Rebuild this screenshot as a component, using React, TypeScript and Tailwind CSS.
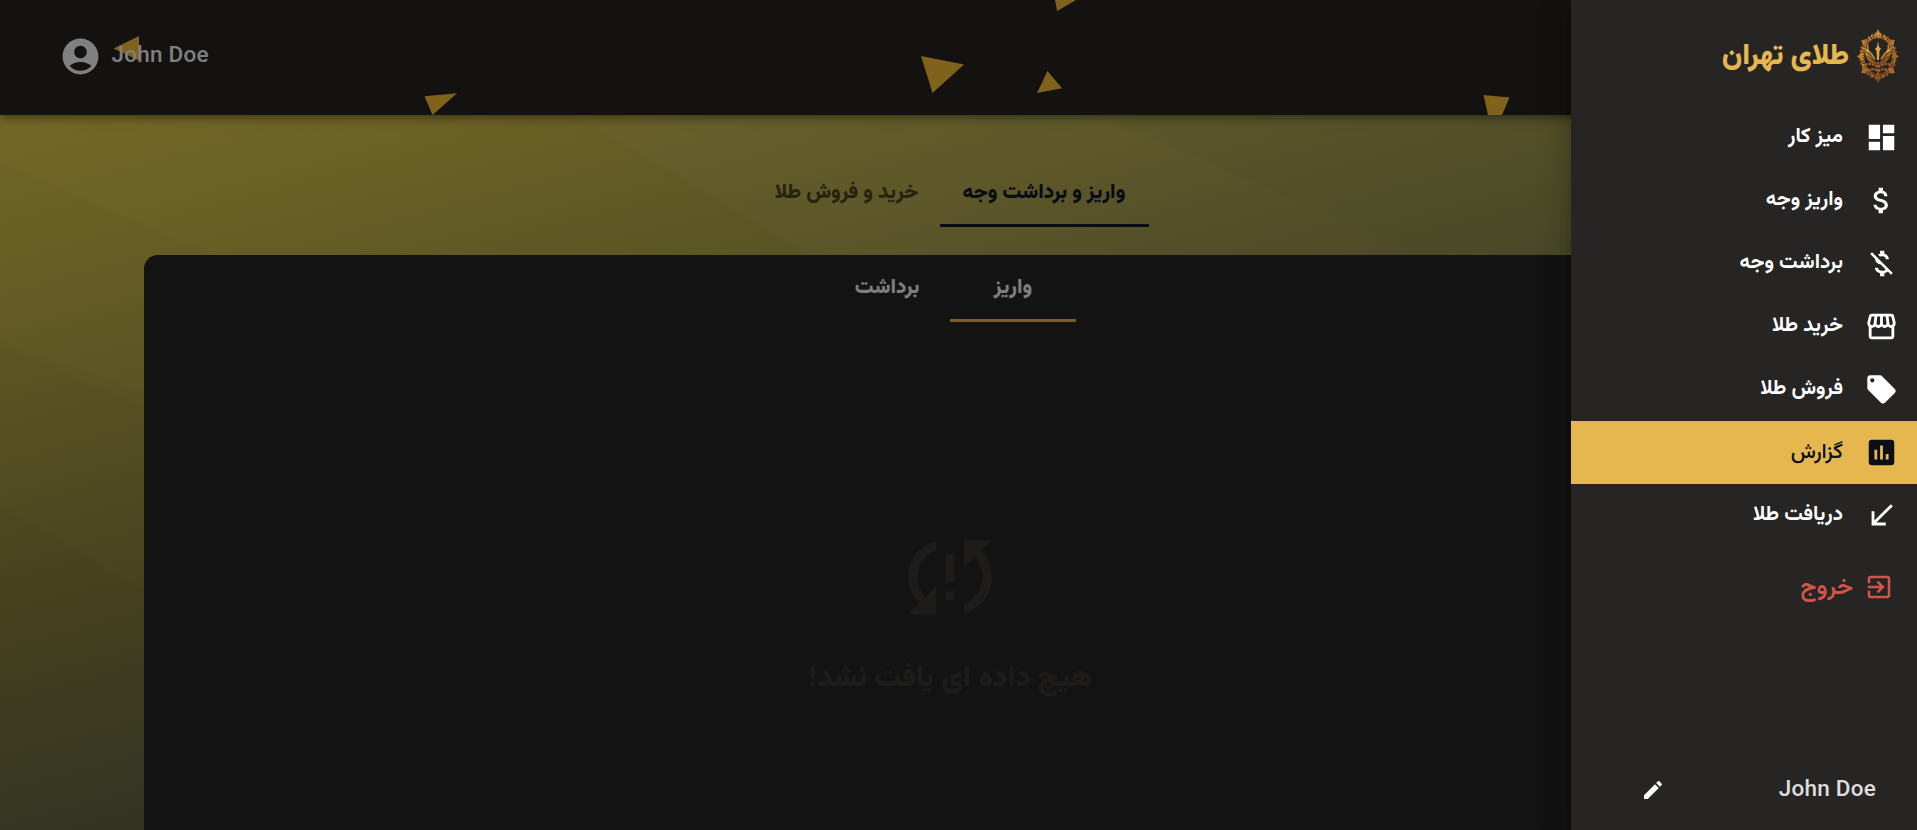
import type { ReactNode } from "react";
import { MdAttachMoney, MdMoneyOff, MdCallReceived, MdEdit } from "react-icons/md";

type IconProps = { className?: string };

function Glyph({ d, className }: { d: string; className?: string }) {
  return (
    <svg viewBox="0 0 24 24" fill="currentColor" className={className} aria-hidden="true">
      <path d={d} />
    </svg>
  );
}

const AccountCircle = (p: IconProps) => (
  <Glyph {...p} d="M12 2C6.48 2 2 6.48 2 12s4.48 10 10 10 10-4.48 10-10S17.52 2 12 2zm0 4c1.93 0 3.5 1.57 3.5 3.5S13.93 13 12 13s-3.5-1.57-3.5-3.5S10.07 6 12 6zm0 14c-2.03 0-4.43-.82-6.14-2.88C7.55 15.8 9.68 15 12 15s4.45.8 6.14 2.12C16.43 19.18 14.03 20 12 20z" />
);
const Dashboard = (p: IconProps) => (
  <Glyph {...p} d="M3 13h8V3H3v10zm0 8h8v-6H3v6zm10 0h8V11h-8v10zm0-18v6h8V3h-8z" />
);
const Storefront = (p: IconProps) => (
  <Glyph {...p} d="M21.9 8.89l-1.05-4.37c-.22-.9-1-1.52-1.91-1.52H5.05c-.9 0-1.69.63-1.9 1.52L2.1 8.89c-.24 1.02-.02 2.06.62 2.88.08.11.19.19.28.29V19c0 1.1.9 2 2 2h14c1.1 0 2-.9 2-2v-6.94c.09-.09.2-.18.28-.28.64-.82.87-1.87.62-2.89zm-2.99-3.9l1.05 4.37c.1.42.01.84-.25 1.17-.14.18-.44.47-.94.47-.61 0-1.14-.49-1.21-1.14L16.98 5l1.93-.01zM13 5h1.96l.54 4.52c.05.39-.07.78-.33 1.07-.22.26-.54.41-.95.41-.67 0-1.22-.59-1.22-1.31V5zM8.49 9.52L9.04 5H11v4.69c0 .72-.55 1.31-1.29 1.31-.34 0-.65-.15-.89-.41-.25-.29-.37-.68-.33-1.07zm-4.45-.16L5.05 5h1.97l-.58 4.86c-.08.65-.6 1.14-1.21 1.14-.49 0-.8-.29-.93-.47-.27-.32-.36-.75-.26-1.17zM5 19v-6.03c.08.01.15.03.23.03.87 0 1.66-.36 2.24-.95.6.6 1.4.95 2.31.95.87 0 1.65-.36 2.23-.93.59.57 1.39.93 2.29.93.84 0 1.64-.35 2.24-.95.58.59 1.37.95 2.24.95.08 0 .15-.02.23-.03V19H5z" />
);
const Tag = (p: IconProps) => (
  <Glyph {...p} d="M21.41 11.58l-9-9C12.05 2.22 11.55 2 11 2H4c-1.1 0-2 .9-2 2v7c0 .55.22 1.05.59 1.42l9 9c.36.36.86.58 1.41.58.55 0 1.05-.22 1.41-.59l7-7c.37-.36.59-.86.59-1.41 0-.55-.23-1.06-.59-1.42zM5.5 7C4.67 7 4 6.33 4 5.5S4.67 4 5.5 4 7 4.67 7 5.5 6.33 7 5.5 7z" />
);
const Assessment = (p: IconProps) => (
  <Glyph {...p} d="M19 3H5c-1.1 0-2 .9-2 2v14c0 1.1.9 2 2 2h14c1.1 0 2-.9 2-2V5c0-1.1-.9-2-2-2zM9 17H7v-7h2v7zm4 0h-2V7h2v10zm4 0h-2v-4h2v4z" />
);
const ExitToApp = (p: IconProps) => (
  <Glyph {...p} d="M10.09 15.59L11.5 17l5-5-5-5-1.41 1.41L12.67 11H3v2h9.67l-2.58 2.59zM19 3H5c-1.11 0-2 .9-2 2v4h2V5h14v14H5v-4H3v4c0 1.1.89 2 2 2h14c1.1 0 2-.9 2-2V5c0-1.1-.9-2-2-2z" />
);
const SyncProblem = (p: IconProps) => (
  <Glyph {...p} d="M3 12c0 2.21.91 4.2 2.36 5.64L3 20h6v-6l-2.24 2.24C5.68 15.15 5 13.66 5 12c0-2.61 1.67-4.83 4-5.65V4.26C5.55 5.15 3 8.27 3 12zm8 5h2v-2h-2v2zM21 4h-6v6l2.24-2.24C18.32 8.85 19 10.34 19 12c0 2.61-1.67 4.83-4 5.65v2.09c3.45-.89 6-4.01 6-7.74 0-2.21-.91-4.2-2.36-5.64L21 4zm-10 9h2V7h-2v6z" />
);

function Emblem() {
  return (
    <svg viewBox="0 0 42 54" className="h-[54px] w-[42px]" fill="none" aria-hidden="true">
      <defs>
        <linearGradient id="gold" x1="0" y1="0" x2="0.3" y2="1">
          <stop offset="0" stopColor="#b07c2e" />
          <stop offset="0.45" stopColor="#c08430" />
          <stop offset="1" stopColor="#84491c" />
        </linearGradient>
      </defs>
      <ellipse cx="21" cy="27" rx="15.8" ry="20" stroke="#5d3a1a" strokeWidth="4.6" />
      <ellipse cx="21" cy="27" rx="15.8" ry="20" stroke="url(#gold)" strokeWidth="3.8" strokeDasharray="2.2 1.3 1.2 1" />
      <ellipse cx="21" cy="27" rx="18.2" ry="22.2" stroke="#9c6024" strokeWidth="1.6" strokeDasharray="1.6 2.6" />
      <path d="M21 0l1.7 3.2L25 5l-2.2 1.6L21 10l-1.8-3.4L17 5l2.3-1.8zM21 54l1.7-3.2L25 49l-2.2-1.6L21 44l-1.8 3.4L17 49l2.3 1.8zM0 27.500l3-2.200 2-3 1 5.200-1 5-2-3zM42 27.500l-3-2.200-2-3-1 5.200 1 5 2-3z" fill="url(#gold)" />
      <path d="M4 11l5-.5 2 5-5 .7zM38 11l-5-.5-2 5 5 .7zM4 44l5 .5 2-5-5-.7zM38 44l-5 .5-2-5 5-.7z" fill="#a86a2a" />
      <path d="M21 12l1 6 2 1.500-1.500 2.500L22 31h-2l-.5-9-1.500-2.500 2-1.500z" fill="#d8a848" />
      <path d="M19.500 36C12 34 7 29 8 17c1.800 2.500 2.700 4.500 4.500 7 2.300 3.200 6 5 7 12zM22.500 36C30 34 35 29 34 17c-1.800 2.500-2.700 4.500-4.500 7-2.300 3.200-6 5-7 12z" fill="url(#gold)" />
      <path d="M11 16c-1 3 0 6 3 8l4 6M31 16c1 3 0 6-3 8l-4 6" stroke="#c8953c" strokeWidth="1.300" />
      <path d="M9 22l9 10M10 27l8 6M33 22l-9 10M32 27l-8 6" stroke="#4d2f15" strokeWidth="0.900" />
      <path d="M8 36c4-2 8-1 13 2 5-3 9-4 13-2M11 42c4-3 6-2 10 0 4-2 6-3 10 0M21 33v12" stroke="#a0602a" strokeWidth="2.200" strokeDasharray="2.600 0.900" />
      <path d="M6 13h1.500M14 7h1M27 7h1M35 14h1M37 33h1M5 36h1.500M15 47h1M26 47h1M21 4v1M10 21l1.500 2M32 21l-1.500 2" stroke="#f0cd78" strokeWidth="1.200" />
    </svg>
  );
}

function Particles() {
  return (
    <svg viewBox="0 0 1917 115" className="absolute left-0 top-0 h-[115px] w-[1917px]" fill="#80621c" aria-hidden="true">
      <path d="M113.500 48.500L139 36v24.500zM424.500 96.300L457 93.200 432.500 115zM921 56l43 8.500L932.500 93zM1047.500 71l14.500 17.200-25 4.800zM1055 0l2.200 11L1076 0zM1483.500 95l26 2.500L1502 115h-14z" />
    </svg>
  );
}

function Backdrop() {
  return (
    <svg viewBox="0 0 1917 830" preserveAspectRatio="none" className="absolute inset-0 h-full w-full" aria-hidden="true">
      <path d="M0 162L213 255 700 470V830H0z" fill="#000" opacity="0.02" />
      <path d="M0 342L144 392 600 550V830H0z" fill="#000" opacity="0.015" />
      <path d="M0 344L144 407 600 600V830H0z" fill="#000" opacity="0.015" />
      <path d="M0 505L144 590 500 830H0z" fill="#000" opacity="0.025" />
      <path d="M575 115L810 255H1917V115z" fill="#8080a0" opacity="0.045" />
      <path d="M1100 115L1420 255H1917V115z" fill="#305040" opacity="0.05" />
    </svg>
  );
}

function Tab({ children, className }: { children: ReactNode; className: string }) {
  return (
    <button className={`flex items-center justify-center border-b-[3px] pt-[3px] text-[20.5px] font-black whitespace-nowrap ${className}`}>
      {children}
    </button>
  );
}

const items = [
  { label: "میز کار", Icon: Dashboard },
  { label: "واریز وجه", Icon: MdAttachMoney },
  { label: "برداشت وجه", Icon: MdMoneyOff },
  { label: "خرید طلا", Icon: Storefront },
  { label: "فروش طلا", Icon: Tag },
  { label: "گزارش", Icon: Assessment, active: true },
  { label: "دریافت طلا", Icon: MdCallReceived },
];

function Drawer() {
  return (
    <aside className="absolute inset-y-0 right-0 flex w-[346px] flex-col bg-[#262524] shadow-[0_8px_10px_-5px_rgba(0,0,0,0.2),0_16px_24px_2px_rgba(0,0,0,0.14),0_6px_30px_5px_rgba(0,0,0,0.12)]">
      <div className="flex h-[106px] shrink-0 items-start gap-[8px] pr-[18px] pt-[29px]">
        <Emblem />
        <span className="pt-[7px] text-[29px] leading-[42px] font-black text-[#e6b74e]">طلای تهران</span>
      </div>
      <nav className="flex flex-col">
        {items.map(({ label, Icon, active }) => (
          <a
            key={label}
            className={`flex h-[63px] items-center gap-[21px] pr-[18px] ${
              active ? "bg-[#e6b74e] text-[21px] font-medium text-[#0c0f19]" : "text-[20.5px] font-bold text-white"
            }`}
          >
            <Icon className="size-[35px] p-[0.5px]" />
            <span>{label}</span>
          </a>
        ))}
      </nav>
      <a className="mt-[14px] flex h-[52px] items-center gap-[11px] pr-[23px] text-[24px] font-semibold text-[#d3544b]">
        <ExitToApp className="size-[30px]" />
        <span className="pt-px">خروج</span>
      </a>
      <div className="mt-auto flex h-[83px] items-center justify-between pr-[41px] pl-[70px]">
        <span dir="ltr" className="font-[Roboto,sans-serif] text-[22.5px] font-medium tracking-[0.01em] text-[#dedede]">John Doe</span>
        <MdEdit className="mt-[3px] size-6 text-white" />
      </div>
    </aside>
  );
}

export default function App() {
  return (
    <div
      dir="rtl"
      className="relative h-[830px] w-full overflow-hidden bg-[linear-gradient(165deg,#776a27_5%,#6b6126_19%,#5b5524_33%,#4c4823_47%,#3b3b26_62%,#303226_80%)] font-[Vazirmatn,'Noto_Sans_Arabic','DejaVu_Sans',sans-serif]"
    >
      <Backdrop />
      <header className="relative h-[115px] bg-[#141210] shadow-[0_2px_10px_rgba(0,0,0,0.5)]">
        <Particles />
        <div dir="ltr" className="relative flex h-full items-center gap-[10px] pb-[3px] pl-[58.5px] text-[#808080]">
          <AccountCircle className="size-[43px]" />
          <span className="pb-[3px] font-[Roboto,sans-serif] text-[22.5px] font-medium tracking-[0.01em]">John Doe</span>
        </div>
      </header>

      <main className="relative mr-[15px] flex flex-col items-center">
        <div className="flex h-[140px] items-start pt-[45px]">
          <Tab className="h-[67px] w-[209px] border-[#090c14] text-[#090c14]">واریز و برداشت وجه</Tab>
          <Tab className="h-[67px] w-[186px] border-transparent text-[#26240f]">خرید و فروش طلا</Tab>
        </div>
        <section className="flex h-[575px] w-[1614px] flex-col items-center rounded-t-[14px] bg-[#131313]">
          <div className="mr-0.5 flex h-[67px]">
            <Tab className="w-[126px] border-[#7a5f25] text-[#7d7d7d]">واریز</Tab>
            <Tab className="w-[126px] border-transparent text-[#7d7d7d]">برداشت</Tab>
          </div>
          <div className="mr-0.5 flex flex-col items-center pt-[199px] text-[#1d1c1a]">
            <SyncProblem className="size-[112px]" />
            <p className="mt-[22px] text-[29.5px] leading-[48px] font-black">هیچ داده ای یافت نشد!</p>
          </div>
        </section>
      </main>

      <Drawer />
    </div>
  );
}
